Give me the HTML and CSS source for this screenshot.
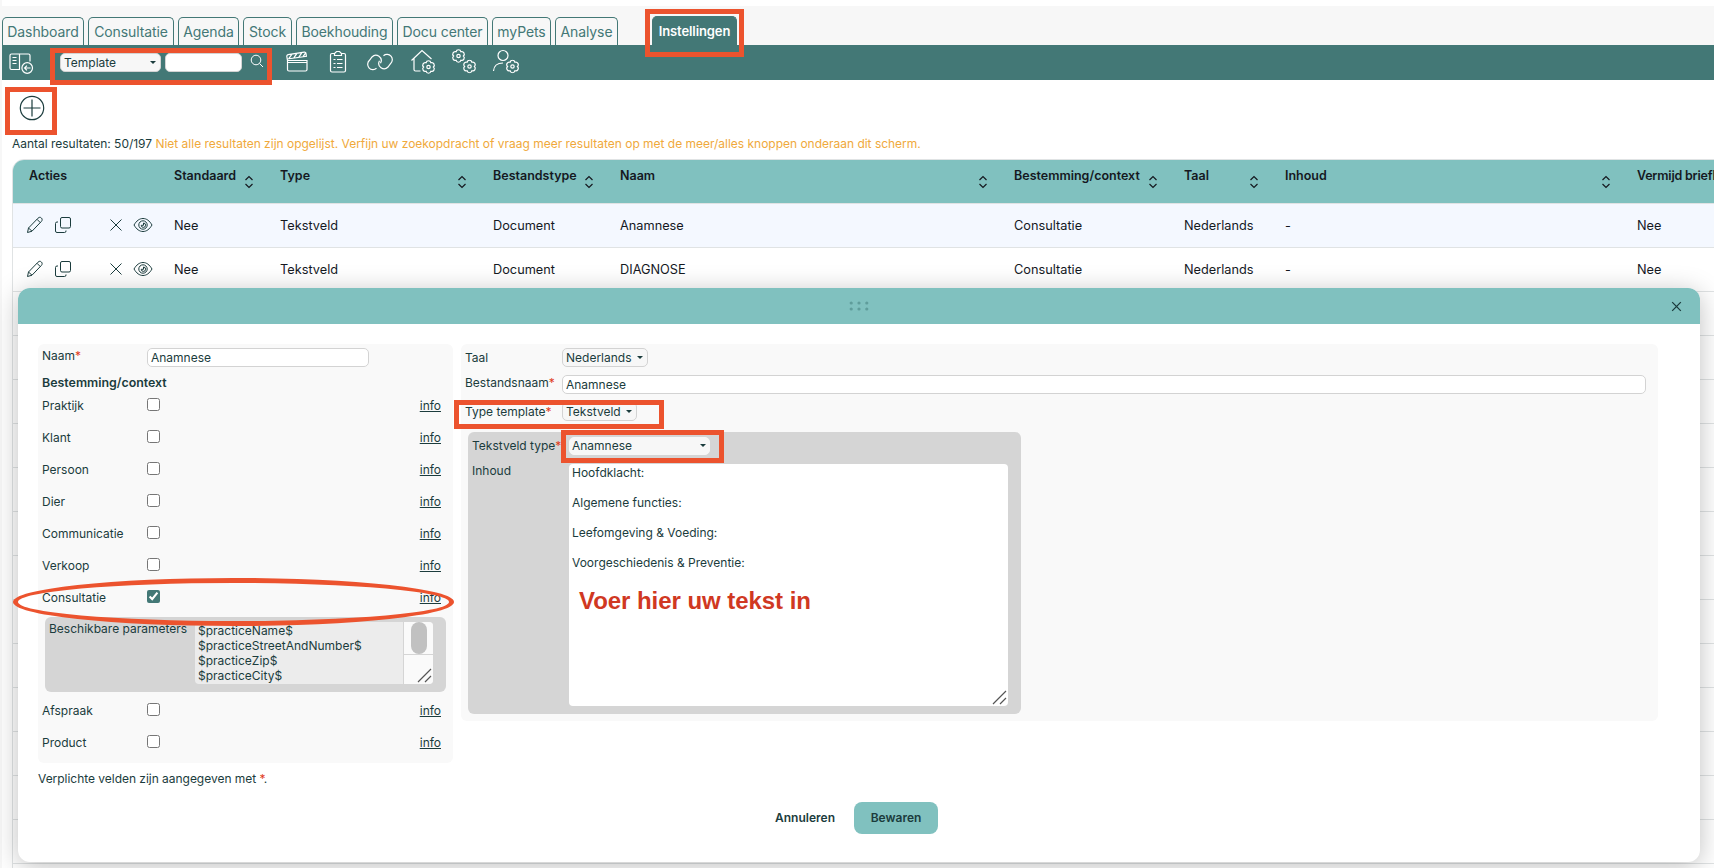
FILE: index.html
```
<!DOCTYPE html>
<html lang="nl">
<head>
    <meta charset="UTF-8">
    <meta name="viewport" content="width=device-width, initial-scale=1.0">
    <title>Instellingen - Template</title>
    <link rel="stylesheet" href="styles.css">
</head>
<body>
    <svg class="defs" width="0" height="0">
        <symbol id="gear" viewBox="0 0 14 14">
            <path d="M4.550 2.760A2.500 2.500 0 0 1 9.450 2.760A2.500 2.500 0 0 1 11.900 7A2.500 2.500 0 0 1 9.450 11.240A2.500 2.500 0 0 1 4.550 11.240A2.500 2.500 0 0 1 2.100 7A2.500 2.500 0 0 1 4.550 2.760z"/>
            <circle cx="7" cy="7" r="1.700"/>
        </symbol>
        <symbol id="pencil" viewBox="0 0 18 18">
            <path d="M1.500 16.500l1-4.500L12 2.200c1.200-1.200 2.400-1.200 3.400-.2s1 2.300 0 3.400L6 15.200zM11 3.300l3.400 3.400M2.500 12l3.500 3.200"/>
        </symbol>
        <symbol id="copy" viewBox="0 0 18 18">
            <rect x="6.500" y="1.500" width="10" height="10.500" rx="1.500"/>
            <path d="M4 6H3a1.500 1.500 0 0 0-1.500 1.500V15A1.500 1.500 0 0 0 3 16.500h7.500A1.500 1.500 0 0 0 12 15v-.5"/>
        </symbol>
        <symbol id="cross" viewBox="0 0 14 14">
            <path d="M1.500 1.500l11 11M12.500 1.500l-11 11"/>
        </symbol>
        <symbol id="eye" viewBox="0 0 20 16">
            <path d="M1 8c2.500-4.300 5.500-6.500 9-6.500S16.500 3.700 19 8c-2.500 4.300-5.500 6.500-9 6.500S3.500 12.300 1 8z"/>
            <circle cx="10" cy="8" r="4.200"/>
            <path d="M10.500 6V8.300H8.200A2.200 2.200 0 1 0 10.500 6"/>
        </symbol>
        <symbol id="sort" viewBox="0 0 10 14">
            <path d="M1.500 5L5 1.500 8.500 5M1.500 9L5 12.500 8.500 9"/>
        </symbol>
    </svg>

    <div class="page">
        <nav class="tabs">
            <a class="tab tab-dashboard">Dashboard</a>
            <a class="tab tab-consultatie">Consultatie</a>
            <a class="tab tab-agenda">Agenda</a>
            <a class="tab tab-stock">Stock</a>
            <a class="tab tab-boekhouding">Boekhouding</a>
            <a class="tab tab-docu">Docu center</a>
            <a class="tab tab-mypets">myPets</a>
            <a class="tab tab-analyse">Analyse</a>
            <a class="tab active">Instellingen</a>
        </nav>

        <div class="toolbar">
            <svg class="tool-panel" width="26" height="24" viewBox="0 0 26 24">
                <path d="M12 18.500H3.500A1.500 1.500 0 0 1 2 17V4.500A1.500 1.500 0 0 1 3.500 3h17A1.500 1.500 0 0 1 22 4.500V10.500M11.500 3v15.500M4.500 6.500h4M4.500 9.500h4M4.500 12.500h4"/>
                <circle cx="19.200" cy="17" r="5.300"/>
                <path d="M22.500 17h-6M18.900 14.700L16.600 17l2.300 2.300"/>
            </svg>
            <div class="select search-type">Template</div>
            <input class="search-input" type="text">
            <svg class="tool-search" width="14" height="14" viewBox="0 0 14 14">
                <circle cx="6" cy="6" r="4.800"/>
                <path d="M9.500 9.500L13 13"/>
            </svg>
            <svg class="tool-clapper" width="24" height="24" viewBox="0 0 24 24">
                <path d="M1.500 10.500h19.500v9a1.500 1.500 0 0 1-1.500 1.500H3a1.500 1.500 0 0 1-1.500-1.500zM1.500 10.500L.8 6.400a1.500 1.500 0 0 1 1.300-1.700l16.200-2.500a1.500 1.500 0 0 1 1.700 1.300l.4 2.800L1.300 9M2.800 8.600l3-4.300M7.800 7.900l3-4.300M12.800 7.200l3-4.300M17 6.600l2.500-3.500M1.500 12.500H21"/>
            </svg>
            <svg class="tool-clipboard" width="18" height="24" viewBox="0 0 18 24">
                <path d="M5.500 3.500H3A1.500 1.500 0 0 0 1.500 5v15.500A1.500 1.500 0 0 0 3 22h12a1.500 1.500 0 0 0 1.500-1.500V5A1.500 1.500 0 0 0 15 3.500h-2.500M5.500 5.500v-2L7.500 1.500h3l2 2v2zM4.500 9.500h2M8 9.500h5.500M4.500 13.500h2M8 13.500h5.500M4.500 17.500h2M8 17.500h5.500"/>
            </svg>
            <svg class="tool-link" width="26" height="18" viewBox="0 0 26 18">
                <path d="M9.500 15.300a5.300 5.300 0 0 1-7-8L5 4a5.300 5.300 0 0 1 8.500 6.200M16.500 2.700a5.300 5.300 0 0 1 7 8L21 14a5.300 5.300 0 0 1-8.500-6.200"/>
            </svg>
            <svg class="tool-house" width="26" height="26" viewBox="0 0 26 26">
                <path d="M1.500 11.500L12 1.500 21.500 10M4 9.500v11A1.500 1.500 0 0 0 5.500 22H10.500"/>
                <use href="#gear" x="11.500" y="11" width="14" height="14"/>
            </svg>
            <svg class="tool-gears" width="26" height="26" viewBox="0 0 26 26">
                <use href="#gear" x="0.500" y="0" width="14" height="14"/>
                <use href="#gear" x="11.500" y="10.500" width="14" height="14"/>
            </svg>
            <svg class="tool-user" width="28" height="26" viewBox="0 0 28 26">
                <circle cx="11" cy="6.500" r="5"/>
                <path d="M1.500 22c.3-4.500 3.500-8 9.500-8"/>
                <use href="#gear" x="13.500" y="10.500" width="14" height="14"/>
            </svg>
        </div>

        <div class="add-bar">
            <svg width="26" height="26" viewBox="0 0 26 26">
                <circle cx="13" cy="13" r="11.700"/>
                <path d="M13 4.500v17M4.500 13h17"/>
            </svg>
        </div>

        <p class="results">Aantal resultaten: 50/197 <span class="warning">Niet alle resultaten zijn opgelijst. Verfijn uw zoekopdracht of vraag meer resultaten op met de meer/alles knoppen onderaan dit scherm.</span></p>

        <div class="table">
            <div class="row head">
                <div>Acties</div>
                <div>Standaard <svg class="sort"><use href="#sort"/></svg></div>
                <div>Type <svg class="sort"><use href="#sort"/></svg></div>
                <div>Bestandstype <svg class="sort"><use href="#sort"/></svg></div>
                <div>Naam <svg class="sort"><use href="#sort"/></svg></div>
                <div>Bestemming/context <svg class="sort"><use href="#sort"/></svg></div>
                <div>Taal <svg class="sort"><use href="#sort"/></svg></div>
                <div>Inhoud <svg class="sort"><use href="#sort"/></svg></div>
                <div class="last">Vermijd briefhoofd</div>
            </div>
            <div class="row selected">
                <div class="actions">
                    <svg class="icon"><use href="#pencil"/></svg>
                    <svg class="icon"><use href="#copy"/></svg>
                    <svg class="icon icon-cross"><use href="#cross"/></svg>
                    <svg class="icon icon-eye"><use href="#eye"/></svg>
                </div>
                <div>Nee</div>
                <div>Tekstveld</div>
                <div>Document</div>
                <div>Anamnese</div>
                <div>Consultatie</div>
                <div>Nederlands</div>
                <div>-</div>
                <div>Nee</div>
            </div>
            <div class="row">
                <div class="actions">
                    <svg class="icon"><use href="#pencil"/></svg>
                    <svg class="icon"><use href="#copy"/></svg>
                    <svg class="icon icon-cross"><use href="#cross"/></svg>
                    <svg class="icon icon-eye"><use href="#eye"/></svg>
                </div>
                <div>Nee</div>
                <div>Tekstveld</div>
                <div>Document</div>
                <div>DIAGNOSE</div>
                <div>Consultatie</div>
                <div>Nederlands</div>
                <div>-</div>
                <div>Nee</div>
            </div>
            <div class="row"></div>
            <div class="row"></div>
            <div class="row"></div>
            <div class="row"></div>
            <div class="row"></div>
            <div class="row"></div>
            <div class="row"></div>
            <div class="row"></div>
            <div class="row"></div>
            <div class="row"></div>
            <div class="row"></div>
            <div class="row"></div>
            <div class="row"></div>
            <div class="row"></div>
        </div>
    </div>

    <div class="modal">
        <div class="modal-header">
            <svg class="grip" width="20" height="10" viewBox="0 0 20 10">
                <circle cx="2.200" cy="2" r="1.600"/><circle cx="10" cy="2" r="1.600"/><circle cx="17.800" cy="2" r="1.600"/>
                <circle cx="2.200" cy="8" r="1.600"/><circle cx="10" cy="8" r="1.600"/><circle cx="17.800" cy="8" r="1.600"/>
            </svg>
            <svg class="close" width="11" height="11" viewBox="0 0 14 14"><use href="#cross"/></svg>
        </div>
        <div class="modal-body">
            <div class="panels">
                <div class="panel panel-left">
                    <div class="field field-name">
                        <label>Naam<em>*</em></label>
                        <input class="input" type="text" value="Anamnese">
                    </div>
                    <div class="panel-title">Bestemming/context</div>
                    <div class="check"><label>Praktijk</label><input type="checkbox"><a>info</a></div>
                    <div class="check"><label>Klant</label><input type="checkbox"><a>info</a></div>
                    <div class="check"><label>Persoon</label><input type="checkbox"><a>info</a></div>
                    <div class="check"><label>Dier</label><input type="checkbox"><a>info</a></div>
                    <div class="check"><label>Communicatie</label><input type="checkbox"><a>info</a></div>
                    <div class="check"><label>Verkoop</label><input type="checkbox"><a>info</a></div>
                    <div class="check"><label>Consultatie</label><input type="checkbox" checked><a>info</a></div>
                    <div class="params">
                        <label>Beschikbare parameters</label>
                        <div class="params-list">
                            <div class="params-text">$practiceName$<br>$practiceStreetAndNumber$<br>$practiceZip$<br>$practiceCity$</div>
                            <div class="scrollbar">
                                <div class="track"><div class="thumb"></div></div>
                                <div class="corner"><svg class="resizer" width="15" height="15" viewBox="0 0 15 15"><path d="M1 14L14 1M8 14l6-6"/></svg></div>
                            </div>
                        </div>
                    </div>
                    <div class="check"><label>Afspraak</label><input type="checkbox"><a>info</a></div>
                    <div class="check"><label>Product</label><input type="checkbox"><a>info</a></div>
                </div>

                <div class="panel panel-right">
                    <div class="field field-lang">
                        <label>Taal</label>
                        <div class="select select-lang">Nederlands</div>
                    </div>
                    <div class="field field-file">
                        <label>Bestandsnaam<em>*</em></label>
                        <input class="input" type="text" value="Anamnese">
                    </div>
                    <div class="field field-type">
                        <label>Type template<em>*</em></label>
                        <div class="select select-type">Tekstveld</div>
                    </div>
                    <div class="textfield">
                        <div class="field">
                            <label>Tekstveld type<em>*</em></label>
                            <div class="select select-kind">Anamnese</div>
                        </div>
                        <div class="field field-content">
                            <label>Inhoud</label>
                            <div class="editor">
                                <div>Hoofdklacht:<br><br>Algemene functies:<br><br>Leefomgeving &amp; Voeding:<br><br>Voorgeschiedenis &amp; Preventie:</div>
                                <div class="editor-hint">Voer hier uw tekst in</div>
                                <svg class="resizer" width="15" height="15" viewBox="0 0 15 15"><path d="M1 14L14 1M8 14l6-6"/></svg>
                            </div>
                        </div>
                    </div>
                </div>
            </div>
            <p class="required-note">Verplichte velden zijn aangegeven met <em>*</em>.</p>
            <div class="buttons">
                <button class="cancel">Annuleren</button>
                <button class="save">Bewaren</button>
            </div>
        </div>
    </div>

    <!-- highlights -->
    <div class="mark mark-tab"></div>
    <div class="mark mark-search"></div>
    <div class="mark mark-add"></div>
    <div class="mark mark-type"></div>
    <div class="mark mark-kind"></div>
    <div class="mark mark-consultatie"></div>
</body>
</html>
```

FILE: styles.css
```
* {
    box-sizing: border-box;
}
body {
    margin: 0;
    height: 868px;
    overflow: hidden;
    position: relative;
    font-family: Inter, "Liberation Sans", sans-serif;
    font-size: 12px;
    color: #1b3c3d;
    background-color: white;
}
svg {
    fill: none;
    stroke: currentColor;
    stroke-width: 1.2;
    flex: none;
}
p {
    margin: 0;
}
em {
    font-style: normal;
    color: #e03c1c;
}
input, button {
    font-family: inherit;
    font-size: inherit;
    color: inherit;
}
.defs {
    display: none;
}
.page {
    border-left: 2px solid #f7f7f7;
    padding-top: 6px;
    height: 868px;
    overflow: hidden;
}

/* tabs */
.tabs {
    display: flex;
    align-items: flex-end;
    gap: 4px;
    height: 39px;
    background-color: #f7f7f7;
}
.tab {
    height: 28px;
    border: 1px solid #437876;
    border-bottom: none;
    border-radius: 5px 5px 0 0;
    color: #437876;
    font-size: 14px;
    letter-spacing: -0.1px;
    line-height: 28px;
    text-align: center;
    white-space: nowrap;
}
.tab-dashboard { width: 82px; }
.tab-consultatie { width: 86px; }
.tab-agenda { width: 61px; }
.tab-stock { width: 49px; }
.tab-boekhouding { width: 97px; }
.tab-docu { width: 91px; }
.tab-mypets { width: 59px; }
.tab-analyse { width: 63px; }
.tab.active {
    width: 85px;
    height: 29px;
    margin-left: 30px;
    color: white;
    background-color: #437876;
    font-weight: 600;
    font-size: 13px;
}

/* toolbar */
.toolbar {
    display: flex;
    align-items: flex-start;
    height: 35px;
    padding-left: 6px;
    background-color: #437876;
    color: white;
}
.tool-panel {
    margin: 6px 26px 0 0;
}
.tool-search {
    margin: 9px 22px 0 8px;
    stroke-width: 1;
}
.tool-clapper {
    margin: 5px 19px 0 0;
}
.tool-clipboard {
    margin: 5px 20px 0 0;
}
.tool-link {
    margin: 8px 17px 0 0;
}
.tool-house {
    margin: 4px 15px 0 0;
}
.tool-gears {
    margin: 4px 15px 0 0;
}
.tool-user {
    margin-top: 4px;
}
.select {
    display: flex;
    align-items: center;
    justify-content: space-between;
    height: 19px;
    padding: 0 4px 0 3px;
    border: 1px solid #d3d3d3;
    border-radius: 5px;
    background-color: #f7f7f7;
    color: #1b3c3d;
}
.select::after {
    content: "";
    border: 3px solid transparent;
    border-top-color: #1b3c3d;
    border-bottom: none;
}
.search-type {
    width: 101px;
    margin-top: 8px;
}
.search-input {
    width: 77px;
    height: 19px;
    margin: 8px 0 0 4px;
    border: 1px solid #d3d3d3;
    border-radius: 5px;
}

/* results */
.add-bar {
    height: 56px;
    padding: 15px 0 0 17px;
}
.results {
    height: 23px;
    padding-left: 10px;
    line-height: 16px;
    letter-spacing: -0.015px;
    white-space: nowrap;
}
.warning {
    color: #f0a93b;
}
.table {
    width: 1900px;
    margin-left: 10px;
    border: 1px solid #e0e3e4;
    border-radius: 12px 0 0 0;
    overflow: hidden;
    font-size: 12.75px;
    color: #15191f;
}
.row {
    display: grid;
    grid-template-columns: 145px 106px 213px 127px 394px 170px 101px 352px 200px;
    align-items: center;
    height: 44px;
    padding: 0 0 1px 16px;
    border-bottom: 1px solid #e0e3e4;
}
.head {
    padding-bottom: 0;
    background-color: #80c1bf;
    font-weight: 600;
    font-size: 12.5px;
}
.head > div {
    display: flex;
    align-items: center;
    justify-content: space-between;
    height: 16px;
    margin-bottom: 12px;
    white-space: nowrap;
}
.head .last {
    letter-spacing: -0.2px;
}
.sort {
    width: 10px;
    height: 14px;
    margin: 13px 26px 0 0;
}
.selected {
    background-color: #f4f8ff;
}
.actions {
    display: flex;
    align-items: center;
    color: #1b3c3d;
    margin-left: -3px;
}
.icon {
    width: 18px;
    height: 18px;
    margin-right: 10px;
    stroke-width: 1;
}
.icon-cross {
    width: 14px;
    height: 14px;
    margin: 0 10px 0 27px;
}
.icon-eye {
    width: 20px;
    height: 16px;
    margin: 0;
}

/* modal */
.modal {
    position: absolute;
    left: 18px;
    top: 288px;
    width: 1682px;
    height: 574px;
    border-radius: 12px;
    background-color: white;
    box-shadow: 0 4px 26px rgba(0, 0, 0, 0.25);
    overflow: hidden;
}
.modal-header {
    display: flex;
    align-items: center;
    height: 36px;
    padding: 0 18px 0 831px;
    background-color: #80c1bf;
}
.grip {
    fill: #5f9d9b;
    stroke: none;
}
.close {
    margin-left: auto;
    stroke-width: 1.6;
}
.modal-body {
    padding: 20px 42px 0 20px;
}
.panels {
    display: flex;
    align-items: flex-start;
    gap: 8px;
}
.panel {
    border-radius: 6px;
    background-color: #f9f9f9;
}
.panel-left {
    width: 415px;
    height: 419px;
    padding: 4px 7px 0 4px;
}
.panel-right {
    flex: 1;
    height: 377px;
    padding: 4px 12px 0 4px;
}
.field {
    display: flex;
    align-items: flex-start;
}
label {
    line-height: 15px;
    white-space: nowrap;
}
.input {
    height: 19px;
    padding: 0 3px;
    border: 1px solid #d3d3d3;
    border-radius: 5px;
    background-color: white;
}
.field-name {
    height: 27px;
}
.field-name label {
    width: 105px;
}
.field-name .input {
    width: 222px;
}
.panel-title {
    height: 23px;
    line-height: 16px;
    font-size: 12.4px;
    font-weight: 600;
}
.check {
    display: flex;
    align-items: flex-start;
    height: 32px;
}
.check label {
    width: 105px;
}
.check input {
    width: 13px;
    height: 13px;
    margin: 0;
    accent-color: #437876;
}
.check a {
    margin: 0 5px 0 auto;
    line-height: 15px;
    text-decoration: underline;
}
.params {
    display: flex;
    width: 401px;
    height: 75px;
    margin: -5px 0 11px 3px;
    padding: 5px 0 0 4px;
    border-radius: 6px;
    background-color: #d5d5d5;
}
.params label {
    width: 146px;
    margin-top: -1px;
}
.params-list {
    display: flex;
    width: 238px;
    height: 62px;
    border-radius: 4px;
    background-color: #ececec;
    overflow: hidden;
}
.params-text {
    flex: 1;
    padding: 1px 3px;
    line-height: 15px;
}
.scrollbar {
    width: 30px;
    border-left: 1px solid #d5d5d5;
    background-color: #fafafa;
}
.track {
    height: 32px;
    padding-left: 7px;
}
.thumb {
    width: 16px;
    height: 32px;
    border-radius: 8px;
    background-color: #c1c1c1;
}
.corner {
    height: 30px;
    padding: 13px 0 0 13px;
    border-top: 1px solid #d5d5d5;
}
.resizer {
    display: block;
    color: #555;
}
.panel-right label {
    width: 97px;
}
.field-lang {
    height: 27px;
}
.field-lang label {
    padding-top: 2px;
}
.select-lang {
    width: 86px;
}
.field-file {
    height: 27px;
}
.field-file .input {
    flex: 1;
}
.field-type {
    height: 30px;
}
.field-type label {
    padding-top: 2px;
}
.select-type {
    width: 75px;
}
.textfield {
    width: 553px;
    height: 282px;
    margin-left: 3px;
    padding: 5px 0 0 4px;
    border-radius: 6px;
    background-color: #d5d5d5;
}
.select-kind {
    width: 141px;
    height: 18px;
    padding: 0 3px 1px 2px;
    border-color: #f7f7f7;
}
.textfield label {
    padding-top: 1px;
}
.field-content {
    margin-top: 9px;
}
.textfield .field-content label {
    padding-top: 0;
    margin-top: -1px;
}
.editor {
    position: relative;
    width: 439px;
    height: 242px;
    padding: 1px 3px;
    border-radius: 4px;
    background-color: white;
    line-height: 15px;
}
.editor-hint {
    margin: 17px 0 0 7px;
    font: bold 24px/28px "Liberation Sans", Arial, sans-serif;
    letter-spacing: -0.05px;
    color: #d03822;
}
.editor .resizer {
    position: absolute;
    right: 1px;
    bottom: 1px;
}
.required-note {
    margin-top: 8px;
    line-height: 16px;
    letter-spacing: -0.03px;
}
.buttons {
    display: flex;
    align-items: center;
    gap: 19px;
    margin: 15px 0 0 737px;
}
.buttons button {
    height: 32px;
    padding: 0 0 1px;
    border: none;
    font-weight: 600;
}
.cancel {
    width: 60px;
    background: none;
}
.buttons .save {
    width: 84px;
    border-radius: 8px;
    background-color: #80c1bf;
}

/* highlights */
.mark {
    position: absolute;
    border: 5px solid #ec532e;
}
.mark-tab {
    left: 645px;
    top: 9px;
    width: 99px;
    height: 48px;
}
.mark-search {
    left: 50px;
    top: 48px;
    width: 222px;
    height: 37px;
}
.mark-add {
    left: 5px;
    top: 87px;
    width: 52px;
    height: 48px;
}
.mark-type {
    left: 454px;
    top: 400px;
    width: 210px;
    height: 29px;
}
.mark-kind {
    left: 561px;
    top: 430px;
    width: 163px;
    height: 33px;
}
.mark-consultatie {
    left: 13px;
    top: 578px;
    width: 441px;
    height: 48px;
    border-radius: 50%;
}
```
